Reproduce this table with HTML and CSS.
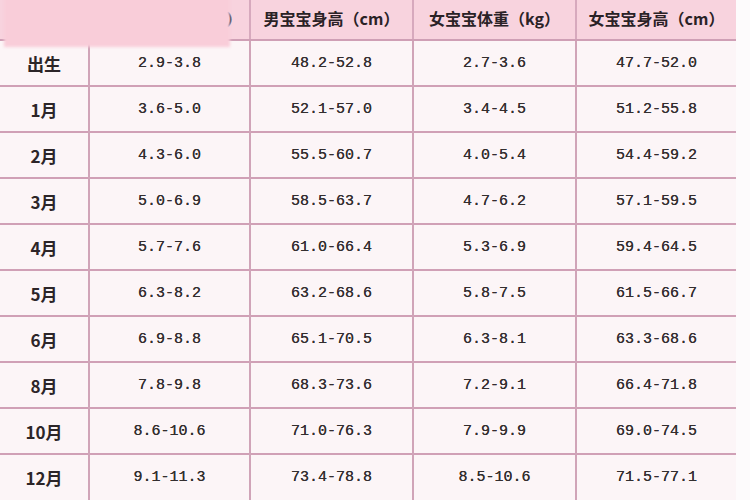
FILE: index.html
```html
<!DOCTYPE html>
<html lang="zh">
<head>
<meta charset="utf-8">
<link rel="stylesheet" href="styles.css">
</head>
<body>
<div class="wrap">
<table class="chart">
<colgroup>
<col class="c1"><col class="c2"><col class="c3"><col class="c4"><col class="c5">
</colgroup>
<thead>
<tr><th></th><th class="hidden-head">男宝宝体重（kg）</th><th>男宝宝身高（cm）</th><th>女宝宝体重（kg）</th><th>女宝宝身高（cm）</th></tr>
</thead>
<tbody>
<tr><td class="lab">出生</td><td>2.9-3.8</td><td>48.2-52.8</td><td>2.7-3.6</td><td>47.7-52.0</td></tr>
<tr><td class="lab">1月</td><td>3.6-5.0</td><td>52.1-57.0</td><td>3.4-4.5</td><td>51.2-55.8</td></tr>
<tr><td class="lab">2月</td><td>4.3-6.0</td><td>55.5-60.7</td><td>4.0-5.4</td><td>54.4-59.2</td></tr>
<tr><td class="lab">3月</td><td>5.0-6.9</td><td>58.5-63.7</td><td>4.7-6.2</td><td>57.1-59.5</td></tr>
<tr><td class="lab">4月</td><td>5.7-7.6</td><td>61.0-66.4</td><td>5.3-6.9</td><td>59.4-64.5</td></tr>
<tr><td class="lab">5月</td><td>6.3-8.2</td><td>63.2-68.6</td><td>5.8-7.5</td><td>61.5-66.7</td></tr>
<tr><td class="lab">6月</td><td>6.9-8.8</td><td>65.1-70.5</td><td>6.3-8.1</td><td>63.3-68.6</td></tr>
<tr><td class="lab">8月</td><td>7.8-9.8</td><td>68.3-73.6</td><td>7.2-9.1</td><td>66.4-71.8</td></tr>
<tr><td class="lab">10月</td><td>8.6-10.6</td><td>71.0-76.3</td><td>7.9-9.9</td><td>69.0-74.5</td></tr>
<tr><td class="lab">12月</td><td>9.1-11.3</td><td>73.4-78.8</td><td>8.5-10.6</td><td>71.5-77.1</td></tr>
</tbody>
</table>
<div class="smudge"></div>
</div>
</body>
</html>
```
FILE: styles.css
```css
html, body {
  margin: 0;
  padding: 0;
  background: #fdfbfc;
}
.wrap {
  position: relative;
  width: 750px;
  height: 500px;
  overflow: hidden;
}
.chart {
  border-collapse: collapse;
  table-layout: fixed;
  width: 736px;
  font-family: "Liberation Mono", "Noto Sans CJK SC", monospace;
}
.c1 { width: 89px; }
.c2 { width: 161px; }
.c3 { width: 163px; }
.c4 { width: 163px; }
.c5 { width: 160px; }
.chart th {
  height: 40px;
  padding: 0 0 4px 0;
  background: #f8d3de;
  border-left: 2px solid #d7a9bd;
  border-bottom: 2px solid #cf9fb5;
  font-family: "Noto Sans CJK SC", sans-serif;
  font-weight: 700;
  font-size: 16px;
  color: #2a2226;
  text-align: center;
  white-space: nowrap;
  box-sizing: border-box;
}
.chart th:first-child { border-left: none; }
.chart th.hidden-head { padding-left: 14px; }
.chart td {
  height: 46px;
  padding: 0;
  background: #fcf5f7;
  border-left: 2px solid #d0a4b8;
  border-top: 2px solid #d0a0b6;
  font-size: 15px;
  color: #332e2f;
  text-align: center;
  box-sizing: border-box;
  text-shadow: 0 0 0.4px #332e2f;
}
.chart td:first-child { border-left: none; }
.chart tbody tr:first-child td { border-top: none; }
.chart td.lab {
  font-family: "Noto Sans CJK SC", sans-serif;
  font-weight: 700;
  font-size: 17px;
  color: #2c2528;
  text-shadow: none;
}
.smudge {
  position: absolute;
  left: 4px;
  top: -4px;
  width: 226px;
  height: 51px;
  background: #f9cdd9;
  filter: blur(1.5px);
}
```
